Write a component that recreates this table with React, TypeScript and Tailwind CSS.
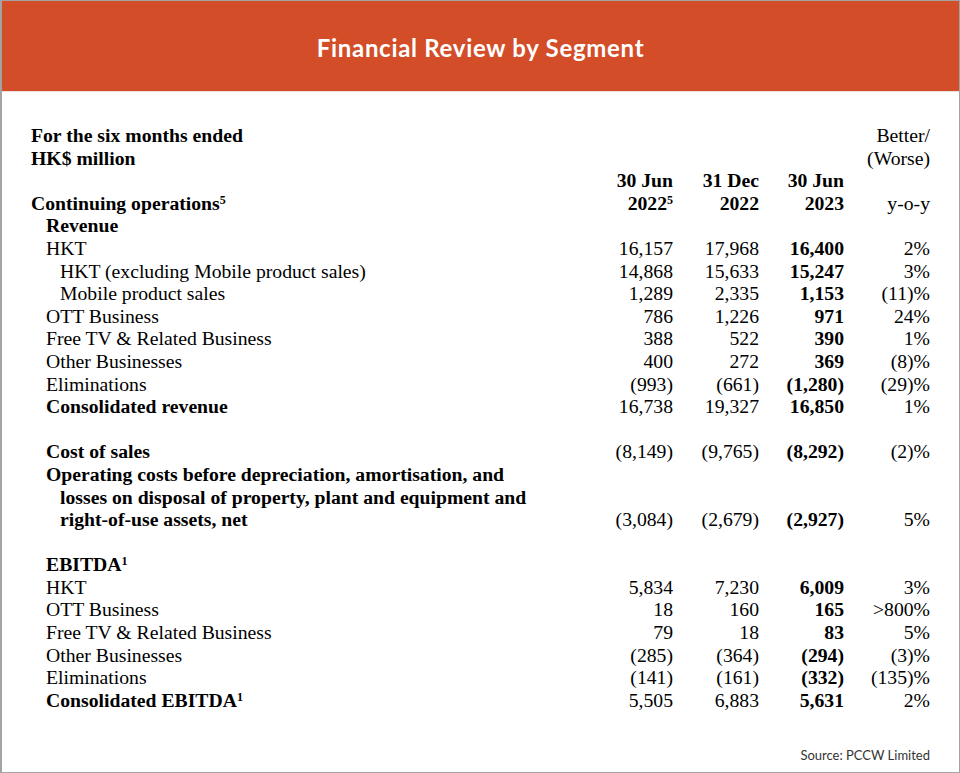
import React from "react";

type Row = {
  label: React.ReactNode;
  indent?: 0 | 1 | 2;
  bold?: boolean;
  vals?: [string, string, string, string];
};

const Sup = ({ n }: { n: string }) => <sup className="text-[12px] font-bold">{n}</sup>;

const rows: Row[] = [
  { label: "Revenue", indent: 1, bold: true },
  { label: "HKT", indent: 1, vals: ["16,157", "17,968", "16,400", "2%"] },
  { label: "HKT (excluding Mobile product sales)", indent: 2, vals: ["14,868", "15,633", "15,247", "3%"] },
  { label: "Mobile product sales", indent: 2, vals: ["1,289", "2,335", "1,153", "(11)%"] },
  { label: "OTT Business", indent: 1, vals: ["786", "1,226", "971", "24%"] },
  { label: "Free TV & Related Business", indent: 1, vals: ["388", "522", "390", "1%"] },
  { label: "Other Businesses", indent: 1, vals: ["400", "272", "369", "(8)%"] },
  { label: "Eliminations", indent: 1, vals: ["(993)", "(661)", "(1,280)", "(29)%"] },
  { label: "Consolidated revenue", indent: 1, bold: true, vals: ["16,738", "19,327", "16,850", "1%"] },
  { label: "\u00a0", indent: 1 },
  { label: "Cost of sales", indent: 1, bold: true, vals: ["(8,149)", "(9,765)", "(8,292)", "(2)%"] },
  { label: "Operating costs before depreciation, amortisation, and", indent: 1, bold: true },
  { label: "losses on disposal of property, plant and equipment and", indent: 2, bold: true },
  { label: "right-of-use assets, net", indent: 2, bold: true, vals: ["(3,084)", "(2,679)", "(2,927)", "5%"] },
  { label: "\u00a0", indent: 1 },
  {
    label: (
      <>
        EBITDA<Sup n="1" />
      </>
    ),
    indent: 1,
    bold: true,
  },
  { label: "HKT", indent: 1, vals: ["5,834", "7,230", "6,009", "3%"] },
  { label: "OTT Business", indent: 1, vals: ["18", "160", "165", ">800%"] },
  { label: "Free TV & Related Business", indent: 1, vals: ["79", "18", "83", "5%"] },
  { label: "Other Businesses", indent: 1, vals: ["(285)", "(364)", "(294)", "(3)%"] },
  { label: "Eliminations", indent: 1, vals: ["(141)", "(161)", "(332)", "(135)%"] },
  {
    label: (
      <>
        Consolidated EBITDA<Sup n="1" />
      </>
    ),
    indent: 1,
    bold: true,
    vals: ["5,505", "6,883", "5,631", "2%"],
  },
];

const indentCls = ["pl-0", "pl-[15px]", "pl-[29px]"];

export default function App() {
  return (
    <div className="w-[960px] h-[773px] bg-white border border-[#a3a3a3] border-l-2 flex flex-col overflow-hidden">
      <div className="h-[91px] bg-[#d34d28] flex items-center justify-center shrink-0 border-b border-[#e8e2e0]">
        <h1
          className="text-white font-bold text-[24px] tracking-[0.7px] leading-[30px] mt-[3px]"
          style={{ fontFamily: '"Lato", "Noto Sans", sans-serif' }}
        >
          Financial Review by Segment
        </h1>
      </div>
      <div
        className="flex-1 flex flex-col pl-[29px] pr-[29px] pt-[32px] text-[19.7px] leading-[22.6px] text-black"
        style={{ fontFamily: '"Liberation Serif", "Times New Roman", serif' }}
      >
        <div className="grid grid-cols-[1fr_86px_86px_85px_86px]">
          <div className="font-bold">For the six months ended</div>
          <div />
          <div />
          <div />
          <div className="text-right">Better/</div>

          <div className="font-bold">HK$ million</div>
          <div />
          <div />
          <div />
          <div className="text-right">(Worse)</div>

          <div>&nbsp;</div>
          <div className="text-right font-bold">30 Jun</div>
          <div className="text-right font-bold">31 Dec</div>
          <div className="text-right font-bold">30 Jun</div>
          <div />

          <div className="font-bold">
            Continuing operations<Sup n="5" />
          </div>
          <div className="text-right font-bold">
            2022<Sup n="5" />
          </div>
          <div className="text-right font-bold">2022</div>
          <div className="text-right font-bold">2023</div>
          <div className="text-right">y-o-y</div>

          {rows.map((r, i) => (
            <React.Fragment key={i}>
              <div className={`${indentCls[r.indent ?? 0]} ${r.bold ? "font-bold" : ""} whitespace-nowrap`}>
                {r.label}
              </div>
              <div className="text-right">{r.vals?.[0]}</div>
              <div className="text-right">{r.vals?.[1]}</div>
              <div className="text-right font-bold">{r.vals?.[2]}</div>
              <div className="text-right">{r.vals?.[3]}</div>
            </React.Fragment>
          ))}
        </div>
        <div className="flex-1" />
        <div
          className="text-right text-[13px] leading-[20px] text-[#333] pb-[7px]"
          style={{ fontFamily: '"Lato", "Noto Sans", sans-serif' }}
        >
          Source: PCCW Limited
        </div>
      </div>
    </div>
  );
}
